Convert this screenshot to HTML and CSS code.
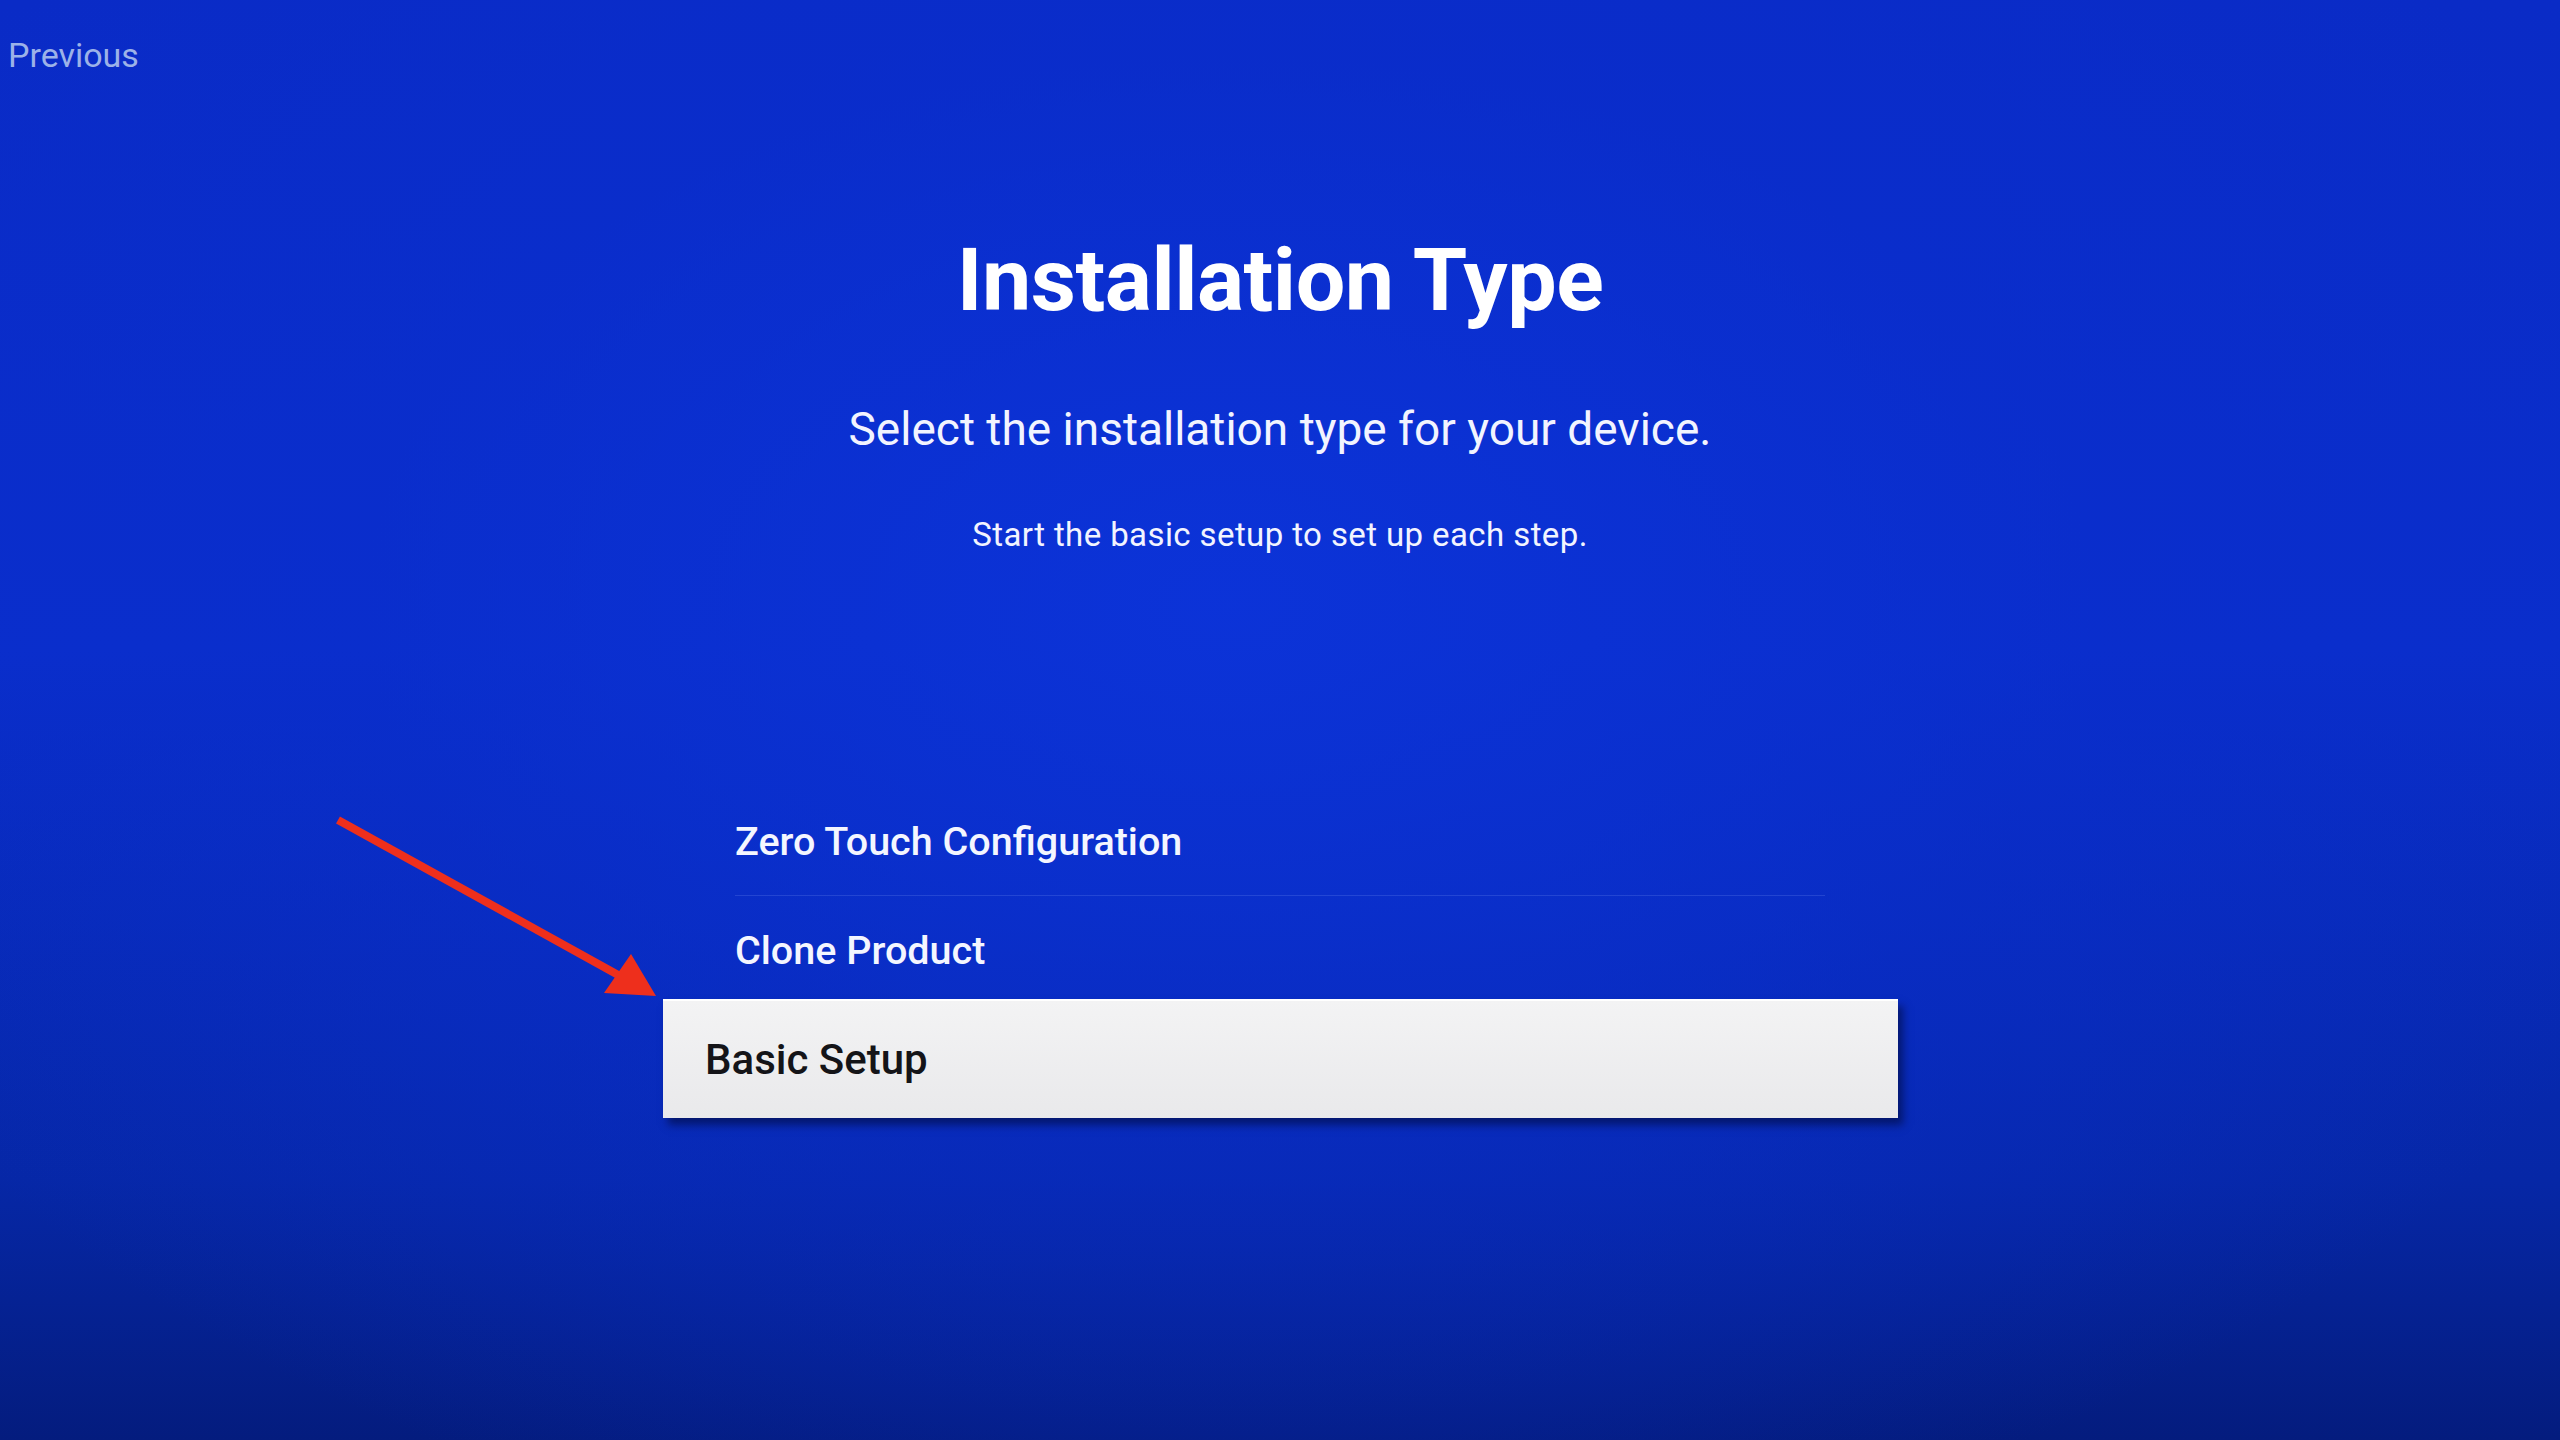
FILE: index.html
```html
<!DOCTYPE html>
<html lang="en">
<head>
    <meta charset="UTF-8">
    <meta name="viewport" content="width=device-width, initial-scale=1.0">
    <title>Installation Type</title>
    <link rel="stylesheet" href="styles.css">
</head>
<body>
    <div class="screen">
        <div class="topbar">
            <div class="previous">Previous</div>
        </div>

        <h1 class="title">Installation Type</h1>
        <p class="subtitle">Select the installation type for your device.</p>
        <p class="hint">Start the basic setup to set up each step.</p>

        <ul class="menu">
            <li class="item">Zero Touch Configuration</li>
            <li class="item">Clone Product</li>
            <li class="item focused">Basic Setup</li>
        </ul>

        <!-- annotation arrow -->
        <svg class="arrow" viewBox="0 0 2560 1440" xmlns="http://www.w3.org/2000/svg">
            <line x1="338" y1="820" x2="620" y2="976" stroke="#ee2f1c" stroke-width="8" stroke-linecap="butt"/>
            <polygon points="656,996 604,993 631,954" fill="#ee2f1c"/>
        </svg>
    </div>
</body>
</html>
```

FILE: styles.css
```css
* {
    margin: 0;
    padding: 0;
    box-sizing: border-box;
}

html, body {
    width: 100%;
    height: 100%;
}

body {
    font-family: Roboto, "Noto Sans", sans-serif;
    background: #0628a8;
    overflow: hidden;
}

.screen {
    position: relative;
    width: 2560px;
    height: 1440px;
    display: flex;
    flex-direction: column;
    align-items: center;
    background:
        radial-gradient(ellipse 75% 85% at 48% 42%, rgba(12, 52, 218, 0.85) 0%, rgba(10, 46, 206, 0.5) 45%, rgba(6, 36, 170, 0) 80%),
        linear-gradient(180deg, #0a2bc6 0%, #0a2ecb 45%, #0627a6 82%, #041c7e 100%);
}

.topbar {
    align-self: stretch;
    padding: 35px 0 0 8px;
}

.previous {
    font-size: 34px;
    line-height: 40px;
    color: #9cb2e8;
}

.title {
    margin-top: 155px;
    font-size: 88px;
    line-height: 100px;
    font-weight: 700;
    color: #ffffff;
    letter-spacing: -0.5px;
}

.subtitle {
    margin-top: 71px;
    font-size: 46px;
    line-height: 56px;
    font-weight: 400;
    color: #f2f4ff;
}

.hint {
    margin-top: 58px;
    font-size: 33px;
    line-height: 40px;
    letter-spacing: 0.4px;
    color: #f2f4ff;
}

.menu {
    list-style: none;
    margin-top: 232px;
    width: 1090px;
}

.item {
    height: 109px;
    display: flex;
    align-items: center;
    font-size: 39.5px;
    font-weight: 500;
    color: #f4f6ff;
    border-bottom: 1px solid rgba(150, 175, 255, 0.18);
}

.item.focused {
    height: 119px;
    margin: -6px -73px 0 -72px;
    padding-left: 42px;
    border: none;
    border-top: 2px solid #ffffff;
    font-size: 42px;
    color: #141418;
    background: linear-gradient(180deg, #f3f3f4 0%, #e9e9eb 100%);
    box-shadow: 5px 7px 8px rgba(0, 8, 50, 0.55);
}

.arrow {
    position: absolute;
    left: 0;
    top: 0;
    width: 2560px;
    height: 1440px;
    pointer-events: none;
}
```
